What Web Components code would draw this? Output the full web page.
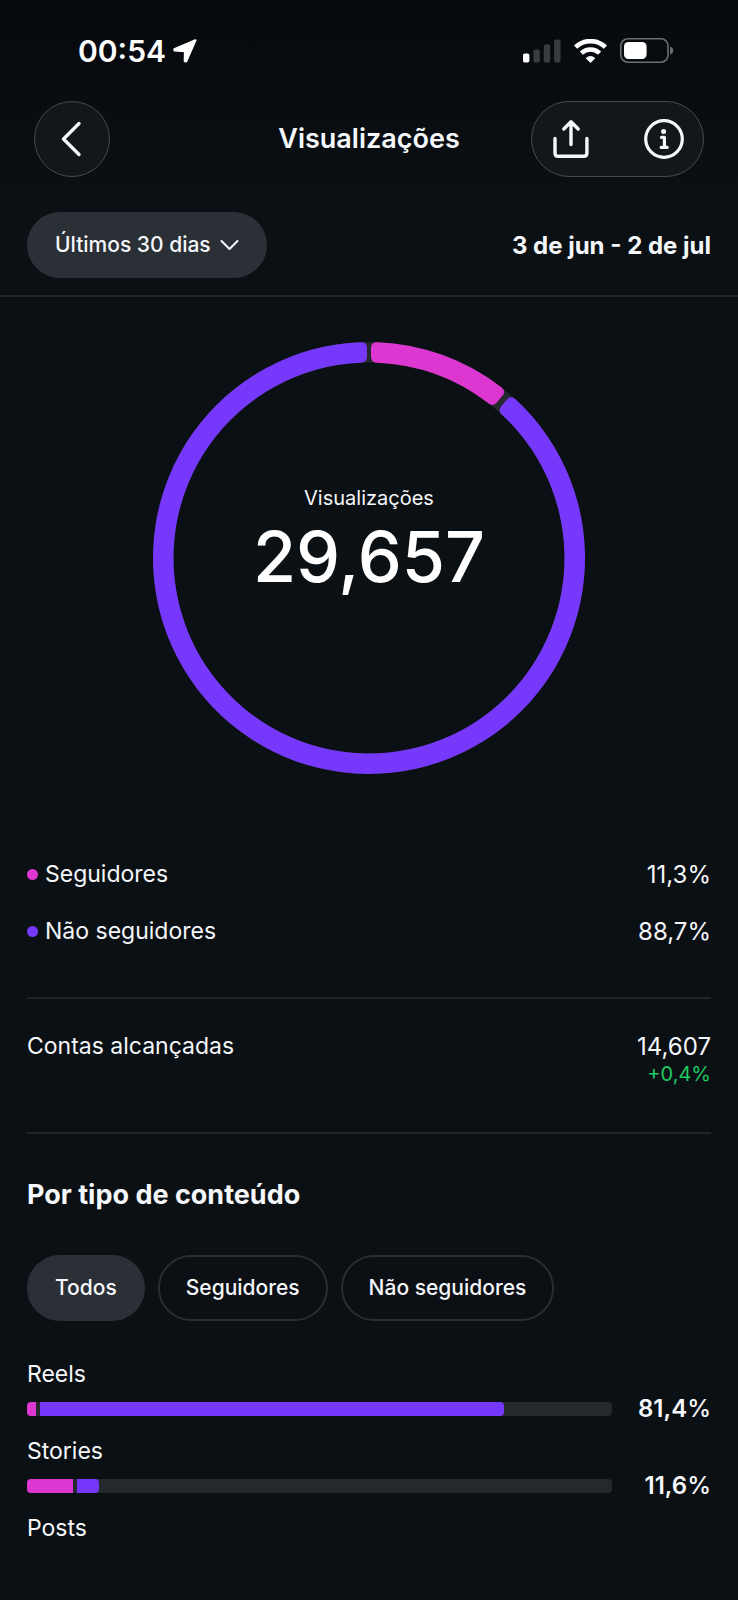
<!DOCTYPE html>
<html lang="pt-BR">
<head>
<meta charset="utf-8">
<meta name="viewport" content="width=device-width, initial-scale=1">
<title>Visualizações</title>
<style>
:root {
  --bg: #0b1014;
  --text: #f5f7fa;
  --pink: #dd37d2;
  --purple: #7638fa;
  --green: #1fc862;
  --line: #212529;
  --track: #25282d;
  --chip: #2b3037;
  --gutter: 27px;
}
body {
  margin: 0;
  min-height: 100vh;
  background: linear-gradient(#06090d, var(--bg) 200px) var(--bg);
  color: var(--text);
  font-family: Inter, "Liberation Sans", sans-serif;
  font-size: 24px;
  line-height: 29px;
}
</style>
</head>
<body>
<insights-page></insights-page>

<script>
// every element below is a template in an open shadow root
class BaseElement extends HTMLElement {
  constructor() {
    super();
    this.attachShadow({ mode: 'open' });
  }

  connectedCallback() {
    this.shadowRoot.innerHTML = this.render();
  }
}

class StatusBar extends BaseElement {
  render() {
    return `
<style>
:host {
  display: flex;
  justify-content: space-between;
  align-items: center;
  height: 101px;
  box-sizing: border-box;
  padding: 0 64px 0 78px;
  color: #fff;
}
div { display: flex; align-items: center; }
.clock { gap: 7px; font-size: 30px; font-weight: 600; line-height: 36px; }
.icons { gap: 13px; }
svg { display: block; }
</style>
<div class="clock">
  <time>00:54</time>
  <svg width="24" height="24" viewBox="0 0 24 24" fill="#fff" stroke="#fff" stroke-width="2.2" stroke-linejoin="round"><path d="M22.4 1.3 1.4 10.2 1.6 11.4 12 12.2 11.8 22.2 13.2 22.4z"/></svg>
</div>
<div class="icons">
  <svg width="38" height="24" viewBox="0 0 38 24" fill="#393c3f">
    <rect x="0" y="14.5" width="6.4" height="9" rx="1.8" fill="#fff"/>
    <rect x="10.4" y="10.5" width="6.4" height="13" rx="1.8"/>
    <rect x="20.8" y="5.5" width="6.4" height="18" rx="1.8"/>
    <rect x="31.1" y=".4" width="6.4" height="23.1" rx="1.8"/>
  </svg>
  <svg width="33" height="24" viewBox="0 0 33 24" fill="none" stroke="#fff" stroke-width="4.6">
    <path d="M1.6 8.2A21.2 21.2 0 0 1 31.4 8.2M7.4 14.2A13 13 0 0 1 25.6 14.2"/>
    <path d="M16.5 24 11.7 19.2Q16.5 14.6 21.3 19.2z" fill="#fff" stroke="none"/>
  </svg>
  <svg width="54" height="25" viewBox="0 0 54 25">
    <rect x=".8" y=".8" width="47.2" height="23.4" rx="7" fill="none" stroke="#6b6e71" stroke-width="1.6"/>
    <rect x="4" y="4" width="22.6" height="17" rx="4.5" fill="#fff"/>
    <path d="M50 8.5Q53.3 9.6 53.3 12.5T50 16.5z" fill="#6b6e71"/>
  </svg>
</div>`;
  }
}

class NavBar extends BaseElement {
  render() {
    return `
<style>
:host {
  display: grid;
  grid-template-columns: 1fr auto 1fr;
  align-items: center;
  padding: 0 34px;
}
h1 { margin: 0; font-size: 27px; line-height: 34px; font-weight: 600; }
button {
  display: flex;
  justify-content: center;
  align-items: center;
  padding: 0;
  border: 0;
  background: none;
  color: inherit;
  cursor: pointer;
}
svg { display: block; fill: none; stroke: currentColor; stroke-linecap: round; stroke-linejoin: round; }
.glass {
  box-sizing: border-box;
  height: 76px;
  border: 1px solid #484b4e;
  border-radius: 38px;
  background: #131719;
}
.back { width: 76px; }
.actions { display: flex; align-items: center; justify-self: end; gap: 53px; padding: 0 19px; }
</style>
<button class="glass back" aria-label="Voltar">
  <svg width="40" height="40" viewBox="0 0 40 40" stroke-width="3.4"><path d="M27 4.5 11.5 20 27 35.5"/></svg>
</button>
<h1><slot></slot></h1>
<div class="glass actions">
  <button aria-label="Compartilhar">
    <svg width="40" height="40" viewBox="0 0 40 40" stroke-width="3.4"><path d="M4 19.5V34.3Q4 37.3 7 37.3H32.9Q35.9 37.3 35.9 34.3V19.5M20 25.5V3.5M12.8 10 20 2.8 27.2 10"/></svg>
  </button>
  <button aria-label="Informações">
    <svg width="40" height="40" viewBox="0 0 40 40" stroke-width="3.2"><circle cx="20" cy="20" r="18.3"/><circle cx="19.6" cy="12.6" r="2.5" fill="currentColor" stroke="none"/><path d="M17.5 18.4H20.4V28.2M17.2 28.4H23.2"/></svg>
  </button>
</div>`;
  }
}

class PeriodBar extends BaseElement {
  render() {
    return `
<style>
:host {
  display: flex;
  justify-content: space-between;
  align-items: center;
  padding: 35px var(--gutter) 17px;
  border-bottom: 2px solid var(--line);
}
.picker { display: grid; align-items: center; }
.picker > * { grid-area: 1 / 1; }
select {
  appearance: none;
  height: 66px;
  padding: 0 56px 0 28px;
  border: 0;
  border-radius: 33px;
  background: var(--chip);
  color: inherit;
  font: 500 21px/28px Inter, "Liberation Sans", sans-serif;
}
svg { justify-self: end; margin-right: 28px; pointer-events: none; }
.range { font-weight: 700; }
</style>
<div class="picker">
  <select aria-label="Período"><option>Últimos 30 dias</option></select>
  <svg width="19" height="12" viewBox="0 0 19 12" fill="none" stroke="currentColor" stroke-width="2" stroke-linecap="round" stroke-linejoin="round"><path d="M1.5 2 9.5 10 17.5 2"/></svg>
</div>
<div class="range"><slot></slot></div>`;
  }
}

class DonutChart extends BaseElement {
  // ring slice from a to b degrees (0 = top), corners rounded, half a gap left on each side
  slice(a, b, color) {
    const R = 216;
    const r = 195.5;
    const c = 6;
    const gap = 2;
    const pt = (radius, deg, off) => {
      const t = (deg * Math.PI) / 180 + off / radius;
      return `${(216 + radius * Math.sin(t)).toFixed(2)} ${(216 - radius * Math.cos(t)).toFixed(2)}`;
    };
    const big = b - a > 180 ? 1 : 0;
    return `<path fill="${color}" d="M${pt(R, a, gap + c)}A${R} ${R} 0 ${big} 1 ${pt(R, b, -gap - c)}
Q${pt(R, b, -gap)} ${pt(R - c, b, -gap)}L${pt(r + c, b, -gap)}Q${pt(r, b, -gap)} ${pt(r, b, -gap - c)}
A${r} ${r} 0 ${big} 0 ${pt(r, a, gap + c)}Q${pt(r, a, gap)} ${pt(r + c, a, gap)}
L${pt(R - c, a, gap)}Q${pt(R, a, gap)} ${pt(R, a, gap + c)}z"/>`;
  }

  render() {
    const split = Number(this.getAttribute('split'));
    return `
<style>
:host { display: grid; justify-items: center; padding: 45px var(--gutter) 0; }
:host > *, svg, .center { grid-area: 1 / 1; }
svg { display: block; width: 100%; max-width: 432px; }
.center { align-self: start; padding-top: 142px; text-align: center; }
.label { font-size: 20px; line-height: 28px; }
.total { color: #fff; font-size: 70px; line-height: 82px; font-weight: 500; margin-top: 4px; }
</style>
<svg viewBox="0 0 432 432" aria-hidden="true">
  <circle cx="216" cy="216" r="205.75" fill="none" stroke="var(--track)" stroke-width="20.5"/>
  ${this.slice(0, split, 'var(--pink)')}
  ${this.slice(split + 0.5, 360, 'var(--purple)')}
</svg>
<div class="center">
  <div class="label">${this.getAttribute('label')}</div>
  <div class="total">${this.getAttribute('total')}</div>
</div>`;
  }
}

class MetricRow extends BaseElement {
  render() {
    const color = this.getAttribute('color');
    const delta = this.getAttribute('delta');
    return `
<style>
:host { display: flex; justify-content: space-between; align-items: flex-start; }
.name { display: flex; align-items: center; gap: 7px; font-size: 23px; }
.dot { width: 11px; height: 11px; border-radius: 50%; background: ${color}; }
.value { text-align: right; }
.delta { color: var(--green); font-size: 20px; line-height: 27px; }
</style>
<div class="name">${color ? '<span class="dot"></span>' : ''}<slot></slot></div>
<div class="value">${this.getAttribute('value')}${delta ? `<div class="delta">${delta}</div>` : ''}</div>`;
  }
}

class FilterChips extends BaseElement {
  render() {
    const chips = this.getAttribute('options').split(',');
    return `
<style>
:host { display: flex; flex-wrap: wrap; gap: 13px; }
button {
  height: 66px;
  padding: 0 26px;
  border: 2px solid #2a2d32;
  border-radius: 33px;
  background: #0c0f14;
  color: inherit;
  font: 500 21px/28px Inter, "Liberation Sans", sans-serif;
  cursor: pointer;
}
button[aria-pressed="true"] { background: var(--chip); border-color: var(--chip); }
</style>
${chips.map((c, i) => `<button aria-pressed="${i === 0}">${c}</button>`).join('')}`;
  }

  connectedCallback() {
    super.connectedCallback();
    const buttons = this.shadowRoot.querySelectorAll('button');
    buttons.forEach(btn => {
      btn.addEventListener('click', () => {
        buttons.forEach(b => b.setAttribute('aria-pressed', b === btn));
      });
    });
  }
}

class ContentBar extends BaseElement {
  render() {
    const value = this.getAttribute('value');
    return `
<style>
:host { display: block; }
.name { font-size: 23px; }
.row { display: grid; grid-template-columns: 1fr 72px; gap: 27px; align-items: center; margin-top: 5px; }
.track { display: flex; gap: 4px; height: 14px; border-radius: 4px; background: var(--track); overflow: hidden; }
.followers { width: ${this.getAttribute('followers')}%; background: var(--pink); }
.others { width: ${this.getAttribute('others')}%; background: var(--purple); border-radius: 0 4px 4px 0; }
.value { justify-self: end; font-weight: 600; white-space: nowrap; }
.value span { font-weight: 500; }
</style>
<div class="name"><slot></slot></div>
${value ? `<div class="row">
  <div class="track"><div class="followers"></div><div class="others"></div></div>
  <div class="value">${value}<span>%</span></div>
</div>` : ''}`;
  }
}

class InsightsPage extends BaseElement {
  render() {
    return `
<style>
:host { display: block; padding-bottom: 56px; }
section { margin: 0 var(--gutter); }
.legend { display: grid; gap: 28px; padding: 86px 0 51px; }
.reach { padding: 33px 0 44px; border: solid var(--line); border-width: 2px 0; }
h2 { margin: 0; padding: 44px 0 43px; font-size: 27px; line-height: 34px; font-weight: 700; }
.bars { display: grid; gap: 14px; padding-top: 39px; }
</style>
<status-bar></status-bar>
<nav-bar>Visualizações</nav-bar>
<period-bar>3 de jun - 2 de jul</period-bar>
<donut-chart label="Visualizações" total="29,657" split="40"></donut-chart>
<section class="legend">
  <metric-row color="var(--pink)" value="11,3%">Seguidores</metric-row>
  <metric-row color="var(--purple)" value="88,7%">Não seguidores</metric-row>
</section>
<section class="reach">
  <metric-row value="14,607" delta="+0,4%">Contas alcançadas</metric-row>
</section>
<section>
  <h2>Por tipo de conteúdo</h2>
  <filter-chips options="Todos,Seguidores,Não seguidores"></filter-chips>
  <div class="bars">
    <content-bar value="81,4" followers="1.5" others="79.3">Reels</content-bar>
    <content-bar value="11,6" followers="7.9" others="3.7">Stories</content-bar>
    <content-bar>Posts</content-bar>
  </div>
</section>`;
  }
}

customElements.define('status-bar', StatusBar);
customElements.define('nav-bar', NavBar);
customElements.define('period-bar', PeriodBar);
customElements.define('donut-chart', DonutChart);
customElements.define('metric-row', MetricRow);
customElements.define('filter-chips', FilterChips);
customElements.define('content-bar', ContentBar);
customElements.define('insights-page', InsightsPage);
</script>
</body>
</html>
